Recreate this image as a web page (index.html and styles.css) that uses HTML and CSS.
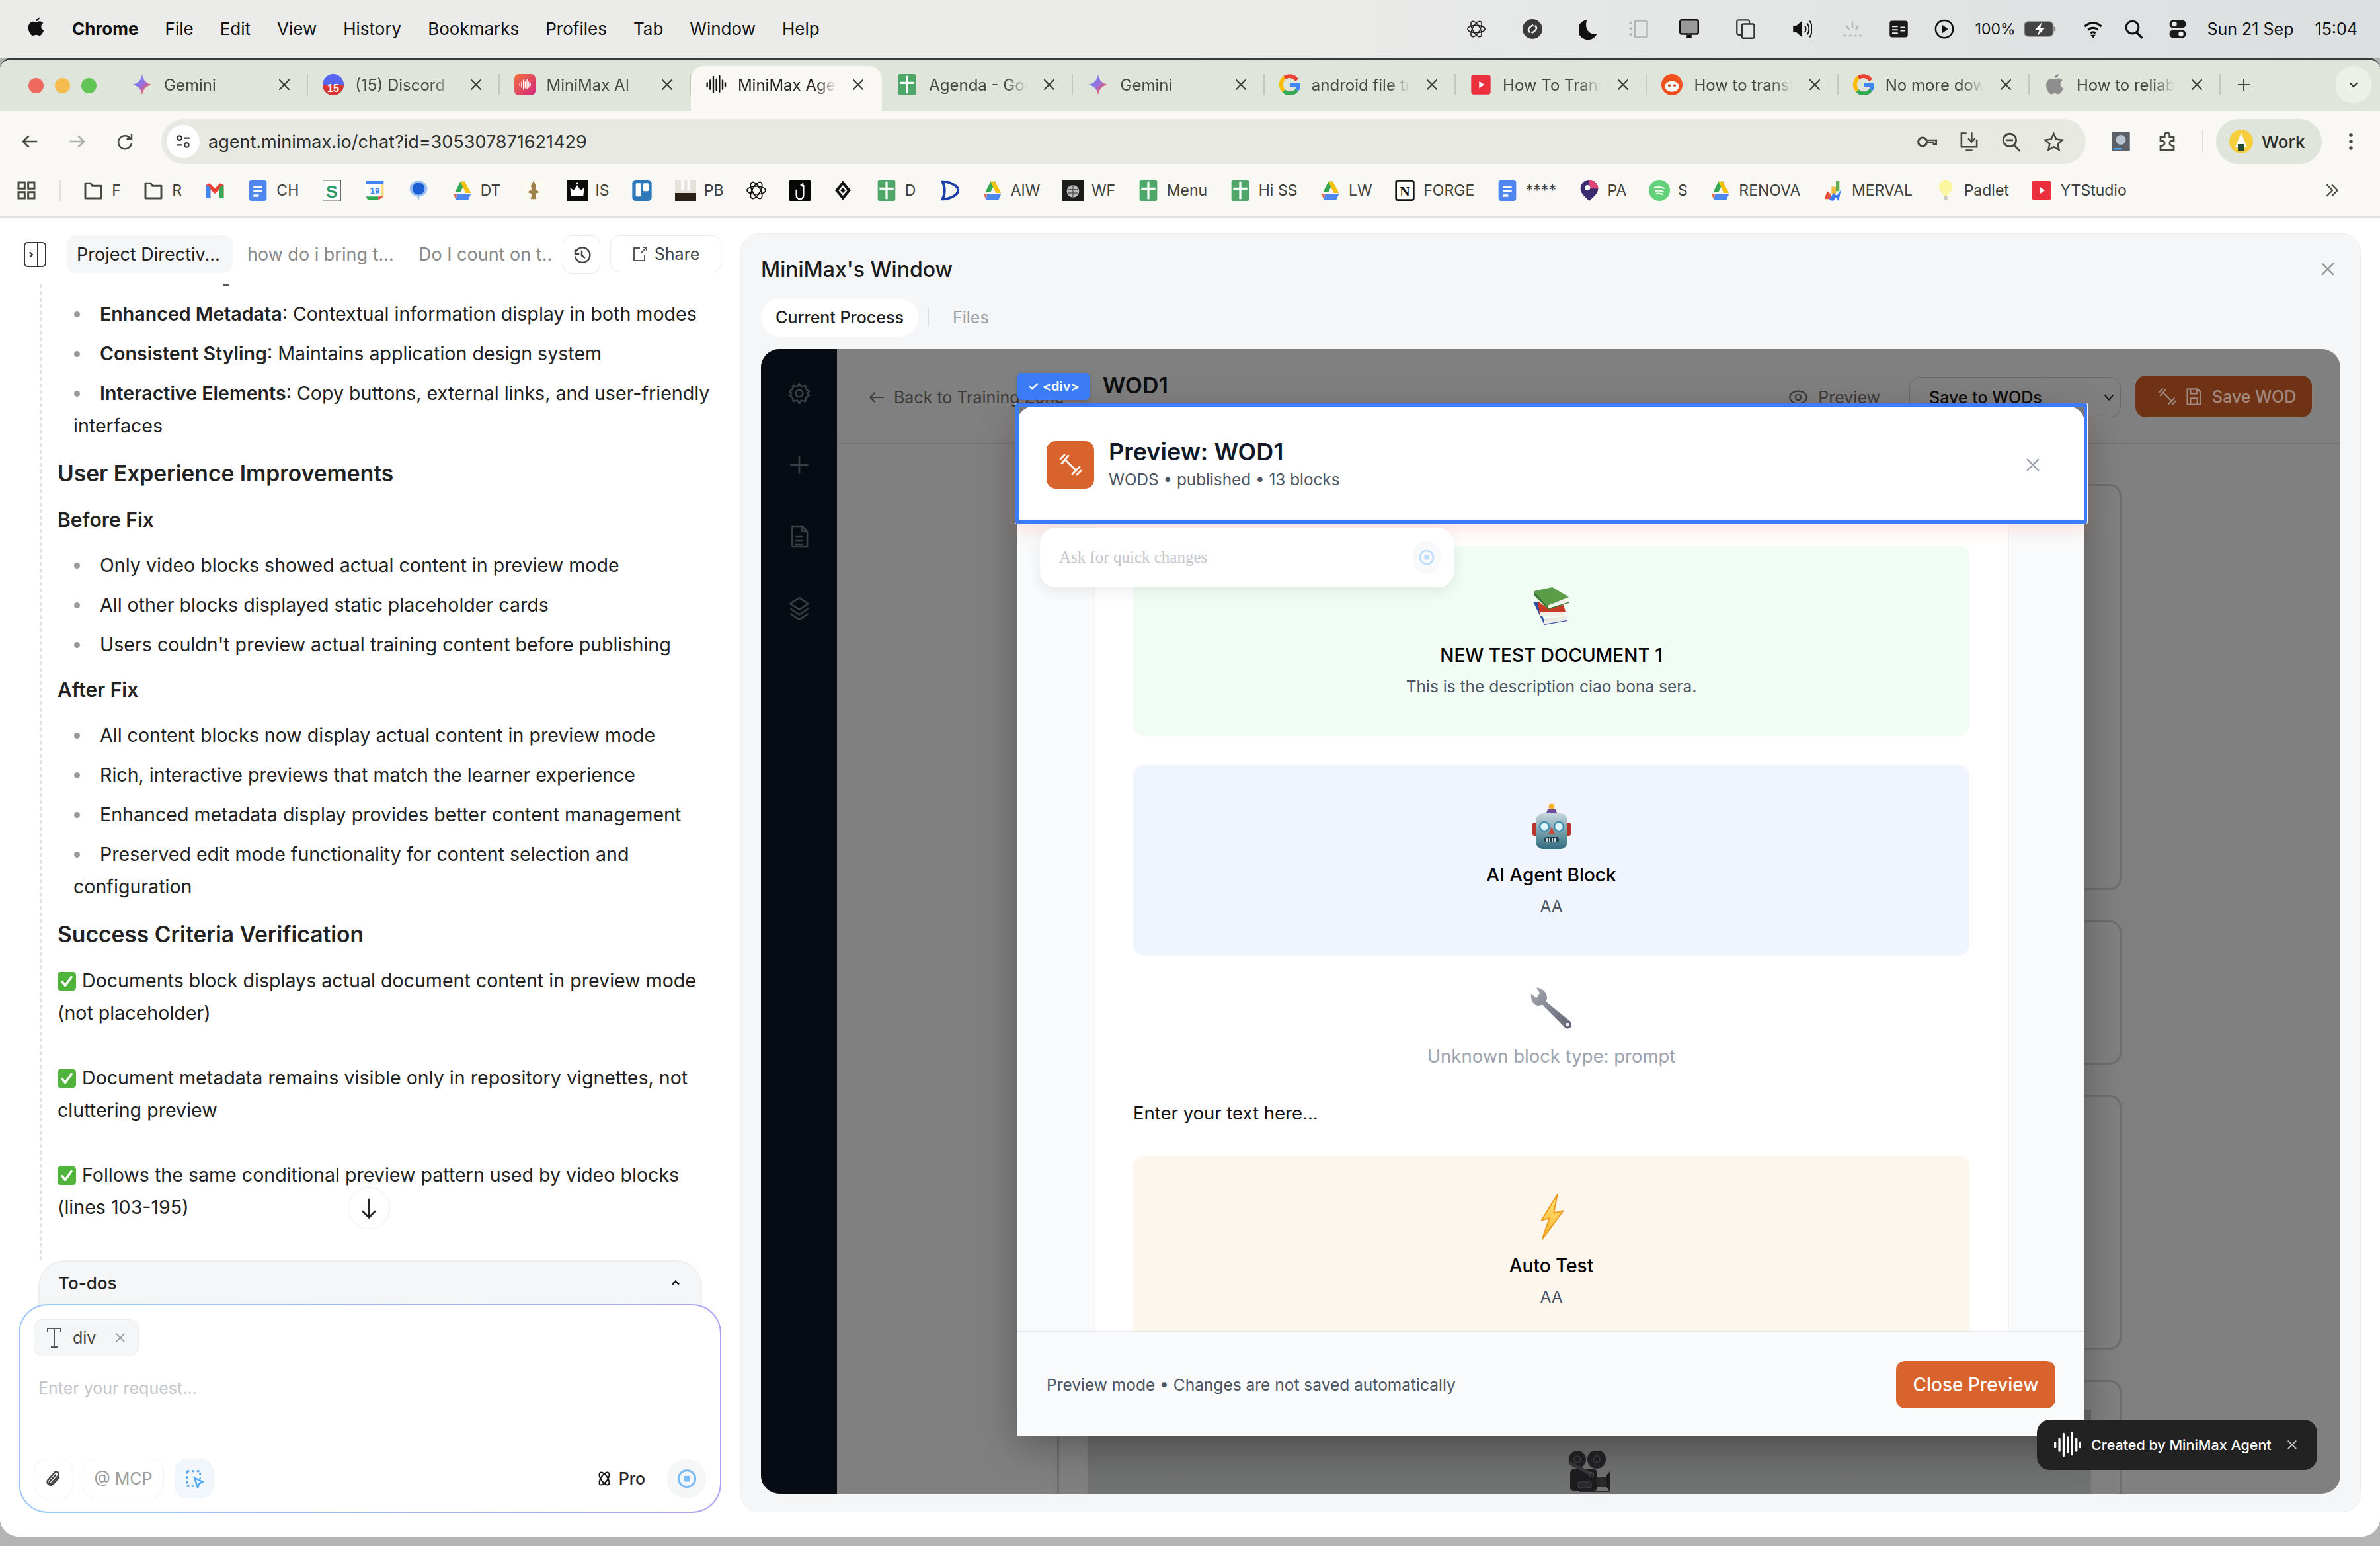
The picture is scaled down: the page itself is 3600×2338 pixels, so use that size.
FILE: index.html
```html
<!DOCTYPE html>
<html>
<head>
    <title>MiniMax Agent</title>
    <link rel="stylesheet" href="styles.css">
</head>
<body>
    <svg class="defs">
        <defs>
            <linearGradient id="gem" x1="0" y1="0" x2="1" y2="1"><stop offset="0" stop-color="#4b8df5"/><stop offset=".5" stop-color="#9a6fe0"/><stop offset=".75" stop-color="#e8605a"/><stop offset="1" stop-color="#f6c344"/></linearGradient>
            <linearGradient id="mm" x1="0" y1="0" x2="1" y2="1"><stop offset="0" stop-color="#f0703c"/><stop offset="1" stop-color="#d6267e"/></linearGradient>
            <linearGradient id="robo" x1="0" y1="0" x2="0" y2="1"><stop offset="0" stop-color="#c6d6dc"/><stop offset="1" stop-color="#2f6c7e"/></linearGradient>
            <linearGradient id="steel" x1="0" y1="0" x2="1" y2="1"><stop offset="0" stop-color="#a3a5ae"/><stop offset="1" stop-color="#5f6270"/></linearGradient>
            <linearGradient id="volt" x1="0" y1="0" x2="0" y2="1"><stop offset="0" stop-color="#ffe27a"/><stop offset="1" stop-color="#fbb92e"/></linearGradient>
        </defs>
        <symbol id="g-gemini" viewBox="0 0 24 24"><path d="M12 0C12.7 6.6 17 11.2 23 12 17 12.8 12.7 17.4 12 24 11.3 17.4 7 12.8 1 12 7 11.2 11.3 6.6 12 0Z" fill="url(#gem)"/></symbol>
        <symbol id="g-sheet" viewBox="0 0 24 24"><rect x="2" width="20" height="24" rx="2" fill="#4ea768"/><path d="M12 2v20M4 10h16" stroke="#fff" stroke-width="2.4"/></symbol>
        <symbol id="g-docs" viewBox="0 0 24 24"><rect x="2" width="20" height="24" rx="3" fill="#4f86f0"/><path d="M7 8h10M7 13h10M7 18h6" stroke="#fff" stroke-width="2.6"/></symbol>
        <symbol id="g-drive" viewBox="0 0 24 24"><path d="M9 2h6L9 14H3Z" fill="#34a853" transform="translate(1 0)"/><path d="M10 2h5l7 13h-6Z" fill="#f4c20d"/><path d="M6 16h16l-3 7H5Z" fill="#4f86f0"/><path d="M2 16l4 0 -1 7Z" fill="#ea6b4a"/></symbol>
        <symbol id="g-google" viewBox="0 0 24 24"><g fill="none" stroke-width="4.4"><path d="M20 7A10 10 0 0 0 6 4" stroke="#ea4335"/><path d="M6 4A10 10 0 0 0 5 19" stroke="#fbbc05"/><path d="M5 19A10 10 0 0 0 20 18" stroke="#34a853"/><path d="M20 18A10 10 0 0 0 22 12H12" stroke="#4285f4"/></g></symbol>
        <symbol id="g-yt" viewBox="0 0 24 24"><rect x="1" y="1" width="22" height="22" rx="3" fill="#ea2f3d"/><path d="M10 8l6 4-6 4Z" fill="#fff"/></symbol>
        <symbol id="g-folder" viewBox="0 0 24 24"><path d="M3 4h6l2 3h10v14H3Z" fill="none" stroke="#45483f" stroke-width="2.2" stroke-linejoin="round"/></symbol>
        <symbol id="g-knot" viewBox="0 0 24 24"><g fill="none" stroke="currentColor" stroke-width="1.3"><ellipse cx="12" cy="12" rx="10.500" ry="4.500"/><ellipse cx="12" cy="12" rx="10.500" ry="4.500" transform="rotate(60 12 12)"/><ellipse cx="12" cy="12" rx="10.500" ry="4.500" transform="rotate(120 12 12)"/></g></symbol>
        <symbol id="g-wave" viewBox="0 0 24 24"><path d="M2 10v4M5.500 7v10M9 3v18M12.500 6v12M16 2v18M19.500 7v10M22.500 10v4" fill="none" stroke="currentColor" stroke-width="1.8" stroke-linecap="round"/></symbol>
        <symbol id="g-close" viewBox="0 0 24 24"><path d="M5 5l14 14M19 5L5 19" fill="none" stroke="currentColor" stroke-width="2.2" stroke-linecap="round"/></symbol>
        <symbol id="g-stop" viewBox="0 0 24 24"><circle cx="12" cy="12" r="10" fill="none" stroke="currentColor" stroke-width="2.6"/><rect x="8.500" y="8.500" width="7" height="7" rx="1" fill="currentColor"/></symbol>
        <symbol id="g-dumbbell" viewBox="0 0 36 36"><path d="M10 10l17 17M5 16L15 4M3 9l6-6M21 32l11-11M28 33l6-6" fill="none" stroke="currentColor" stroke-width="2.800" stroke-linecap="round"/></symbol>
        <symbol id="g-check" viewBox="0 0 24 24"><rect width="24" height="24" rx="4" fill="#4fb33c"/><path d="M6 12.500l4 5 8-11" fill="none" stroke="#fff" stroke-width="3" stroke-linecap="round" stroke-linejoin="round"/></symbol>
    </svg>

    <div class="menubar">
        <div class="menu-left">
            <svg class="apple" viewBox="0 0 24 28"><path d="M17 0c.2 2.400-2 5.400-5 5.200C11.700 2.800 14.200.3 17 0ZM12 7c1.300 0 3-1.400 5.300-1.400 1.800 0 3.900 1 5.100 2.800-4.300 2.600-3.600 8.500.9 10.300-1.200 3.200-3.800 7.800-6.400 7.800-1.700 0-2.400-1.200-4.700-1.200-2.200 0-3 1.200-4.600 1.200C4.600 26.500.7 20.500.7 15c0-5.600 3.600-9 7-9C9.700 6 11 7 12 7Z" fill="#111"/></svg>
            <b>Chrome</b><span>File</span><span>Edit</span><span>View</span><span>History</span><span>Bookmarks</span><span>Profiles</span><span>Tab</span><span>Window</span><span>Help</span>
        </div>
        <div class="menu-right">
            <svg class="mi mi-knot"><use href="#g-knot"/></svg>
            <svg class="mi mi-shaz" viewBox="0 0 24 24"><circle cx="12" cy="12" r="12" fill="#3a3a3a"/><path d="M9 16c-3-2-2-5 1-7l3-2M15 8c3 2 2 5-1 7l-3 2" fill="none" stroke="#eee" stroke-width="2"/></svg>
            <svg class="mi mi-moon" viewBox="0 0 24 24"><path d="M10 1a12 12 0 1 0 12 17C13 20 6 11 10 1Z" fill="#111"/></svg>
            <svg class="mi" viewBox="0 0 24 24"><rect x="7" y="2" width="15" height="20" rx="2" fill="none" stroke="#b5b7b7" stroke-width="2"/><path d="M2 3v3M2 10v3M2 17v3" stroke="#b5b7b7" stroke-width="3"/></svg>
            <svg class="mi" viewBox="0 0 24 24"><rect x="1" y="1" width="22" height="17" rx="2" fill="#999" stroke="#111" stroke-width="2"/><rect x="9" y="19" width="6" height="4" fill="#111"/></svg>
            <svg class="mi mi-copy" viewBox="0 0 24 24"><rect x="1" y="1" width="15" height="18" rx="2" fill="none" stroke="#333" stroke-width="1.800"/><rect x="7" y="6" width="15" height="17" rx="2" fill="#e6e8e8" stroke="#333" stroke-width="2"/></svg>
            <svg class="mi mi-vol" viewBox="0 0 24 24"><path d="M1 8h4l7-6v20l-7-6H1Z" fill="#111"/><path d="M15 8c2 2 2 6 0 8M18 5c3 4 3 10 0 14M21 2c4 6 4 14 0 20" fill="none" stroke="#111" stroke-width="1.500"/></svg>
            <svg class="mi" viewBox="0 0 24 24"><path d="M12 3v8M5 8l3 5M19 8l-3 5M1 20h4M8 20h3M14 20h3M20 20h3" stroke="#b5b7b7" stroke-width="2"/></svg>
            <svg class="mi mi-win" viewBox="0 0 24 24"><rect x="1" y="2" width="22" height="20" rx="3" fill="#1a1a1a"/><path d="M4 9h7M4 13h7M4 17h7M14 10h6M14 14h6" stroke="#eee" stroke-width="1.600"/></svg>
            <svg class="mi mi-play" viewBox="0 0 24 24"><circle cx="12" cy="12" r="10.500" fill="none" stroke="#111" stroke-width="2"/><path d="M9.500 7l7 5-7 5Z" fill="#111"/></svg>
            <span class="pct">100%</span>
            <svg class="mi mi-batt" viewBox="0 0 46 24"><rect x="1" y="2" width="40" height="20" rx="5" fill="#444" stroke="#888" stroke-width="1.500"/><path d="M25 3l-9 10h6l-3 9 10-11h-6Z" fill="#fff"/><path d="M43 9v6" stroke="#888" stroke-width="2.500"/></svg>
            <svg class="mi mi-wifi" viewBox="0 0 24 24"><path d="M2 9a14 14 0 0 1 20 0M6 13a9 9 0 0 1 12 0M9 17a4.500 4.500 0 0 1 6 0" fill="none" stroke="#111" stroke-width="2.600"/><path d="M12 23l-3-4h6Z" fill="#111"/></svg>
            <svg class="mi mi-srch" viewBox="0 0 24 24"><circle cx="10" cy="10" r="7.500" fill="none" stroke="#111" stroke-width="2.400"/><path d="M15 16l7 7" stroke="#111" stroke-width="2.600"/></svg>
            <svg class="mi mi-ctl" viewBox="0 0 24 24"><rect x="2" y="1" width="20" height="10" rx="5" fill="#1a1a1a"/><circle cx="8" cy="6" r="3" fill="#eee"/><rect x="2" y="13" width="20" height="10" rx="5" fill="#1a1a1a"/><circle cx="16" cy="18" r="3" fill="#eee"/></svg>
            <span class="clock">Sun 21 Sep</span><span class="clock">15:04</span>
        </div>
    </div>

    <div class="browser">
        <div class="tabstrip">
            <div class="lights"><i class="light-red"></i><i class="light-amber"></i><i class="light-green"></i></div>
            <div class="tab"><svg class="fav"><use href="#g-gemini"/></svg><span class="tab-title">Gemini</span><svg class="tab-x"><use href="#g-close"/></svg></div>
            <div class="tab"><svg class="fav" viewBox="0 0 24 24"><circle cx="12" cy="12" r="12" fill="#5865f2"/><path d="M0 12a12 12 0 0 0 24 0Z" fill="#d8352c"/><text x="12" y="20" text-anchor="middle" class="fav-num">15</text></svg><span class="tab-title">(15) Discord</span><svg class="tab-x"><use href="#g-close"/></svg></div>
            <div class="tab"><svg class="fav" viewBox="0 0 24 24"><rect width="24" height="24" rx="5" fill="url(#mm)"/><use href="#g-wave" x="5" y="5" width="14" height="14" color="#fff"/></svg><span class="tab-title">MiniMax AI</span><svg class="tab-x"><use href="#g-close"/></svg></div>
            <div class="tab active"><svg class="fav fav-ink"><use href="#g-wave"/></svg><span class="tab-title">MiniMax Agent</span><svg class="tab-x"><use href="#g-close"/></svg></div>
            <div class="tab"><svg class="fav"><use href="#g-sheet"/></svg><span class="tab-title">Agenda - Google</span><svg class="tab-x"><use href="#g-close"/></svg></div>
            <div class="tab"><svg class="fav"><use href="#g-gemini"/></svg><span class="tab-title">Gemini</span><svg class="tab-x"><use href="#g-close"/></svg></div>
            <div class="tab"><svg class="fav"><use href="#g-google"/></svg><span class="tab-title">android file transfer</span><svg class="tab-x"><use href="#g-close"/></svg></div>
            <div class="tab"><svg class="fav"><use href="#g-yt"/></svg><span class="tab-title">How To Transfer</span><svg class="tab-x"><use href="#g-close"/></svg></div>
            <div class="tab"><svg class="fav" viewBox="0 0 24 24"><circle cx="12" cy="12" r="12" fill="#f0501e"/><ellipse cx="12" cy="14" rx="8" ry="6" fill="#fff"/><circle cx="9" cy="13" r="1.600" fill="#c52"/><circle cx="15" cy="13" r="1.600" fill="#c52"/></svg><span class="tab-title">How to transfer</span><svg class="tab-x"><use href="#g-close"/></svg></div>
            <div class="tab"><svg class="fav"><use href="#g-google"/></svg><span class="tab-title">No more downloads</span><svg class="tab-x"><use href="#g-close"/></svg></div>
            <div class="tab"><svg class="fav" viewBox="0 0 24 28"><path d="M17 0c.2 2.400-2 5.400-5 5.200C11.700 2.800 14.200.3 17 0ZM12 7c1.300 0 3-1.400 5.300-1.400 1.800 0 3.900 1 5.100 2.800-4.300 2.600-3.600 8.500.9 10.300-1.200 3.200-3.800 7.800-6.400 7.800-1.700 0-2.400-1.200-4.700-1.200-2.200 0-3 1.200-4.600 1.200C4.600 26.500.7 20.500.7 15c0-5.600 3.600-9 7-9C9.700 6 11 7 12 7Z" fill="#8e8e8e"/></svg><span class="tab-title">How to reliably</span><svg class="tab-x"><use href="#g-close"/></svg></div>
            <svg class="tab-plus" viewBox="0 0 24 24"><path d="M12 3v18M3 12h18" stroke="#45483f" stroke-width="2"/></svg>
            <div class="tab-more"><svg viewBox="0 0 24 24"><path d="M6 9l6 6 6-6" fill="none" stroke="#333" stroke-width="2.400"/></svg></div>
        </div>

        <div class="toolbar">
            <div class="nav-row">
                <svg class="nav" viewBox="0 0 24 24"><path d="M21 12H4M11 5l-7 7 7 7" fill="none" stroke="#45483f" stroke-width="2"/></svg>
                <svg class="nav" viewBox="0 0 24 24"><path d="M3 12h17M13 5l7 7-7 7" fill="none" stroke="#a9aba5" stroke-width="2"/></svg>
                <svg class="nav" viewBox="0 0 24 24"><path d="M19 9a8 8 0 1 0 1 5M20 3v6h-6" fill="none" stroke="#45483f" stroke-width="2"/></svg>
                <div class="url">
                    <span class="site"><svg viewBox="0 0 24 24"><circle cx="7" cy="7" r="3" fill="none" stroke="#333" stroke-width="2"/><path d="M13 7h8M3 17h8" stroke="#333" stroke-width="2"/><circle cx="17" cy="17" r="3" fill="none" stroke="#333" stroke-width="2"/></svg></span>
                    <span class="url-text">agent.minimax.io/chat?id=305307871621429</span>
                    <span class="url-icons">
                        <svg viewBox="0 0 24 24"><circle cx="7" cy="12" r="5" fill="none" stroke="#45483f" stroke-width="2.400"/><path d="M12 10h11v5h-3v-2h-8" fill="none" stroke="#45483f" stroke-width="2"/></svg>
                        <svg viewBox="0 0 24 24"><path d="M9 2H3v16h18V9M8 22h8M15 1v10M11 8l4 4 4-4" fill="none" stroke="#45483f" stroke-width="2"/></svg>
                        <svg viewBox="0 0 24 24"><circle cx="10" cy="10" r="7.500" fill="none" stroke="#45483f" stroke-width="2.200"/><path d="M15 16l7 7M6 10h8" stroke="#45483f" stroke-width="2.200"/></svg>
                        <svg viewBox="0 0 24 24"><path d="M12 2.500l3 6.500 7 .8-5.200 4.700 1.400 7L12 18l-6.200 3.500 1.400-7L2 9.800 9 9Z" fill="none" stroke="#45483f" stroke-width="2"/></svg>
                    </span>
                </div>
                <svg class="nav ext" viewBox="0 0 24 24"><rect x="1" width="22" height="24" rx="2" fill="#5b6067"/><circle cx="12" cy="10" r="6" fill="#b7c3cf"/><rect x="3" y="20" width="10" height="2" fill="#4fa3f0"/></svg>
                <svg class="nav puzzle" viewBox="0 0 24 24"><path d="M4 6h5V4a3 3 0 0 1 6 0v2h5v5h-2a3 3 0 0 0 0 6h2v5H4v-5h2a3 3 0 0 0 0-6H4Z" fill="none" stroke="#45483f" stroke-width="2.200"/></svg>
                <i class="tool-sep"></i>
                <div class="work"><svg viewBox="0 0 36 36"><circle cx="18" cy="18" r="18" fill="#f7cf3e"/><path d="M18 5l9 22H9Z" fill="#fff"/><rect x="13" y="22" width="10" height="10" fill="#244a3a"/></svg><span>Work</span></div>
                <svg class="nav kebab" viewBox="0 0 24 24"><circle cx="12" cy="4" r="2.200" fill="#45483f"/><circle cx="12" cy="12" r="2.200" fill="#45483f"/><circle cx="12" cy="20" r="2.200" fill="#45483f"/></svg>
            </div>
            <div class="bookmarks">
                <svg class="bm-ico" viewBox="0 0 24 24"><path d="M3 3h7v7H3ZM14 3h7v7h-7ZM3 14h7v7H3ZM14 14h7v7h-7Z" fill="none" stroke="#45483f" stroke-width="2.200"/></svg>
                <i class="bm-sep"></i>
                <div class="bm"><svg class="bm-ico"><use href="#g-folder"/></svg><span>F</span></div>
                <div class="bm"><svg class="bm-ico"><use href="#g-folder"/></svg><span>R</span></div>
                <div class="bm"><svg class="bm-ico" viewBox="0 0 24 24"><path d="M2 21V6l4-2 6 6 6-6 4 2v15h-5V11l-5 5-5-5v10Z" fill="#ea4335"/><path d="M2 21V6l5 3v12Z" fill="#4285f4"/><path d="M22 21V6l-5 3v12Z" fill="#34a853"/></svg></div>
                <div class="bm"><svg class="bm-ico"><use href="#g-docs"/></svg><span>CH</span></div>
                <div class="bm"><svg class="bm-ico" viewBox="0 0 24 24"><rect x="2" width="20" height="24" fill="#fff" stroke="#333" stroke-width=".6"/><text x="12" y="20" text-anchor="middle" class="bm-s">S</text></svg></div>
                <div class="bm"><svg class="bm-ico" viewBox="0 0 24 24"><rect x="2" y="1" width="20" height="22" rx="2" fill="#fff"/><path d="M2 1h20v4H2Z" fill="#4285f4"/><path d="M2 19h14v4H4Z" fill="#34a853"/><path d="M16 19h6l-6 4Z" fill="#ea4335"/><path d="M22 5v14h-3V5Z" fill="#fbbc05" opacity=".5"/><text x="12" y="16" text-anchor="middle" class="bm-n">19</text></svg></div>
                <div class="bm"><svg class="bm-ico" viewBox="0 0 24 24"><ellipse cx="12" cy="10" rx="10" ry="9" fill="#9cc0f4"/><ellipse cx="12" cy="10" rx="7" ry="7" fill="#1c5fd4"/><path d="M10 17h4l-2 7Z" fill="#9cc0f4"/></svg></div>
                <div class="bm"><svg class="bm-ico"><use href="#g-drive"/></svg><span>DT</span></div>
                <div class="bm"><svg class="bm-ico" viewBox="0 0 24 24"><rect width="24" height="24" fill="#fbfaf0"/><path d="M12 1l3 6-1 4 5 3-5 2 1 6h-6l1-6-5-2 5-3-1-4Z" fill="#9d7f4a"/></svg></div>
                <div class="bm"><svg class="bm-ico" viewBox="0 0 24 24"><rect width="24" height="24" fill="#0b0b0b"/><path d="M5 18h14l1-9-4 3-4-6-4 6-4-3Z" fill="#fff"/><circle cx="12" cy="4" r="1.400" fill="#fff"/></svg><span>IS</span></div>
                <div class="bm"><svg class="bm-ico" viewBox="0 0 24 24"><rect x="1" width="22" height="24" rx="4" fill="#2f78b9"/><rect x="5" y="4" width="6" height="15" rx="1" fill="#fff"/><rect x="13.500" y="4" width="6" height="9" rx="1" fill="#fff"/></svg></div>
                <div class="bm"><svg class="bm-ico" viewBox="0 0 24 24"><rect width="24" height="24" fill="#e6e2dc"/><path d="M7 0h3v12H7ZM14 0h3v12h-3Z" fill="#fff"/><path d="M0 15h24v9H0Z" fill="#2a2015"/></svg><span>PB</span></div>
                <div class="bm"><svg class="bm-ico ink"><use href="#g-knot"/></svg></div>
                <div class="bm"><svg class="bm-ico" viewBox="0 0 24 24"><rect width="24" height="24" rx="1" fill="#060606"/><path d="M8 11v7a4 4 0 0 0 8 0V6" fill="none" stroke="#fff" stroke-width="1.800"/><path d="M12 6l4-3v6Z" fill="#fff"/></svg></div>
                <div class="bm"><svg class="bm-ico" viewBox="0 0 24 24"><path d="M12 1l9 11-9 11-9-11Z" fill="#111"/><path d="M12 6l5 6-5 6-5-6Z" fill="#fff"/><path d="M12 9l3 3-3 3-3-3Z" fill="#111"/></svg></div>
                <div class="bm"><svg class="bm-ico"><use href="#g-sheet"/></svg><span>D</span></div>
                <div class="bm"><svg class="bm-ico" viewBox="0 0 24 24"><path d="M5 2c10 0 18 6 18 10S15 22 5 22c3-6 3-14 0-20Z" fill="none" stroke="#1b3ea8" stroke-width="3"/></svg></div>
                <div class="bm"><svg class="bm-ico"><use href="#g-drive"/></svg><span>AIW</span></div>
                <div class="bm"><svg class="bm-ico" viewBox="0 0 24 24"><rect width="24" height="24" fill="#1c1c1c"/><circle cx="12" cy="13" r="7" fill="#bdbdbd"/><path d="M6 11h12M6 15h12M12 6v14" stroke="#555"/></svg><span>WF</span></div>
                <div class="bm"><svg class="bm-ico"><use href="#g-sheet"/></svg><span>Menu</span></div>
                <div class="bm"><svg class="bm-ico"><use href="#g-sheet"/></svg><span>Hi SS</span></div>
                <div class="bm"><svg class="bm-ico"><use href="#g-drive"/></svg><span>LW</span></div>
                <div class="bm"><svg class="bm-ico" viewBox="0 0 24 24"><rect x="2" y="1" width="20" height="22" rx="2" fill="#fff" stroke="#111" stroke-width="2"/><text x="12" y="19" text-anchor="middle" class="bm-notion">N</text></svg><span>FORGE</span></div>
                <div class="bm"><svg class="bm-ico"><use href="#g-docs"/></svg><span>****</span></div>
                <div class="bm"><svg class="bm-ico" viewBox="0 0 24 24"><path d="M12 0a10 10 0 0 1 10 10c0 6-6 10-10 14C8 20 2 16 2 10A10 10 0 0 1 12 0Z" fill="#3a2a6e"/><path d="M12 0a10 10 0 0 1 10 10H12Z" fill="#e0447a"/><circle cx="10" cy="9" r="3" fill="#fff"/></svg><span>PA</span></div>
                <div class="bm"><svg class="bm-ico" viewBox="0 0 24 24"><circle cx="12" cy="12" r="12" fill="#63d07a"/><path d="M6 9c4-1 8-1 12 1M7 13c3-1 7-1 10 1M8 16c3-1 5-1 8 1" fill="none" stroke="#f4fff4" stroke-width="1.600"/></svg><span>S</span></div>
                <div class="bm"><svg class="bm-ico"><use href="#g-drive"/></svg><span>RENOVA</span></div>
                <div class="bm"><svg class="bm-ico" viewBox="0 0 24 24"><path d="M2 22l3-9 4 3 0 6Z" fill="#e0533c"/><path d="M15 1h4v12h-4Z" fill="#5fb14f"/><path d="M10 8h5v8h-5Z" fill="#f0b93f"/><path d="M7 23l5-8 4 3 5-7-3 13-3-4-3 4Z" fill="#3b7bf0"/></svg><span>MERVAL</span></div>
                <div class="bm"><svg class="bm-ico" viewBox="0 0 24 24"><path d="M12 0a8 8 0 0 1 5 14l-3 4h-4l-3-4A8 8 0 0 1 12 0Z" fill="#fdf6a0"/><path d="M10 18h4v5h-4Z" fill="#c9cbc7"/></svg><span>Padlet</span></div>
                <div class="bm"><svg class="bm-ico"><use href="#g-yt"/></svg><span>YTStudio</span></div>
                <svg class="bm-more" viewBox="0 0 24 24"><path d="M5 4l8 8-8 8M12 4l8 8-8 8" fill="none" stroke="#45483f" stroke-width="2"/></svg>
            </div>
        </div>

        <div class="main">
            <section class="chat">
                <div class="chat-tabs">
                    <svg class="side-toggle" viewBox="0 0 34 38"><rect x="1" y="1" width="32" height="36" rx="5" fill="none" stroke="#333" stroke-width="2"/><path d="M21 1v36M9 15l4 4-4 4" fill="none" stroke="#333" stroke-width="2"/></svg>
                    <div class="chat-tab current">Project Directiv...</div>
                    <div class="chat-tab">how do i bring t...</div>
                    <div class="chat-tab">Do I count on t..</div>
                    <div class="hist-btn"><svg viewBox="0 0 24 24"><path d="M4 6v5h5M4 11a9 9 0 1 1 0 3M12 7v6l4 3" fill="none" stroke="#444" stroke-width="2"/></svg></div>
                    <div class="share-btn"><svg viewBox="0 0 24 24"><path d="M12 3H3v19h16v-9M13 11l8-8M16 2h6v6" fill="none" stroke="#555" stroke-width="2"/></svg>Share</div>
                </div>

                <div class="chat-scroll">
                    <div class="clipped-tail"><i></i></div>
                    <ul>
                        <li><b>Enhanced Metadata</b>: Contextual information display in both modes</li>
                        <li><b>Consistent Styling</b>: Maintains application design system</li>
                        <li><b>Interactive Elements</b>: Copy buttons, external links, and user-friendly interfaces</li>
                    </ul>
                    <h3>User Experience Improvements</h3>
                    <h4>Before Fix</h4>
                    <ul>
                        <li>Only video blocks showed actual content in preview mode</li>
                        <li>All other blocks displayed static placeholder cards</li>
                        <li>Users couldn't preview actual training content before publishing</li>
                    </ul>
                    <h4>After Fix</h4>
                    <ul>
                        <li>All content blocks now display actual content in preview mode</li>
                        <li>Rich, interactive previews that match the learner experience</li>
                        <li>Enhanced metadata display provides better content management</li>
                        <li>Preserved edit mode functionality for content selection and configuration</li>
                    </ul>
                    <h3>Success Criteria Verification</h3>
                    <p><svg class="tick"><use href="#g-check"/></svg>Documents block displays actual document content in preview mode (not placeholder)</p>
                    <p><svg class="tick"><use href="#g-check"/></svg>Document metadata remains visible only in repository vignettes, not cluttering preview</p>
                    <p><svg class="tick"><use href="#g-check"/></svg>Follows the same conditional preview pattern used by video blocks (lines 103-195)</p>
                </div>

                <div class="scroll-down"><svg viewBox="0 0 24 24"><path d="M12 2v20M5 15l7 7 7-7" fill="none" stroke="#222" stroke-width="2"/></svg></div>

                <div class="todos"><span>To-dos</span><svg viewBox="0 0 24 24"><path d="M6 15l6-6 6 6" fill="none" stroke="#111" stroke-width="3"/></svg></div>

                <div class="composer">
                    <div class="chip">
                        <svg class="chip-t" viewBox="0 0 24 32"><path d="M2 7V2h20v5M12 2v28M7 30h10" fill="none" stroke="#555" stroke-width="2"/></svg>
                        <span>div</span>
                        <svg class="chip-x"><use href="#g-close"/></svg>
                    </div>
                    <div class="placeholder">Enter your request...</div>
                    <div class="composer-bar">
                        <div class="tool-btn"><svg viewBox="0 0 24 24"><path d="M19 10l-8 9a4 4 0 0 1-6-5l9-10a3 3 0 0 1 4 4l-9 10a1.500 1.500 0 0 1-2-2l8-9" fill="none" stroke="#444" stroke-width="2"/></svg></div>
                        <div class="tool-btn mcp">@ MCP</div>
                        <div class="tool-btn sel"><svg viewBox="0 0 24 24"><path d="M3 3h16v9M3 3v18h8" fill="none" stroke="#55a6f5" stroke-width="2.400" stroke-dasharray="3 3"/><path d="M12 11l10 5-4 2-2 5Z" fill="none" stroke="#55a6f5" stroke-width="2"/></svg></div>
                        <div class="pro"><svg viewBox="0 0 24 24"><g fill="none" stroke="#111" stroke-width="2"><ellipse cx="12" cy="12" rx="5" ry="11" transform="rotate(35 12 12)"/><ellipse cx="12" cy="12" rx="5" ry="11" transform="rotate(-35 12 12)"/></g></svg>Pro</div>
                        <div class="send"><svg><use href="#g-stop"/></svg></div>
                    </div>
                </div>
            </section>

            <section class="panel">
                <div class="panel-head"><span>MiniMax's Window</span><svg><use href="#g-close"/></svg></div>
                <div class="panel-tabs"><span class="pill">Current Process</span><i></i><span class="files">Files</span></div>

                <div class="viewport">
                    <aside class="rail">
                        <svg viewBox="0 0 24 24"><circle cx="12" cy="12" r="3.500"/><path d="M12 2l2 3 4-1 1 4 3 2-2 2 2 2-3 2-1 4-4-1-2 3-2-3-4 1-1-4-3-2 2-2-2-2 3-2 1-4 4 1Z"/></svg>
                        <svg viewBox="0 0 24 24"><path d="M12 3v18M3 12h18"/></svg>
                        <svg viewBox="0 0 24 24"><path d="M5 2h10l5 5v15H5ZM15 2v5h5M8 12h8M8 16h8M8 20h8"/></svg>
                        <svg viewBox="0 0 24 24"><path d="M12 2l9 6-9 6-9-6ZM3 13l9 6 9-6M3 18l9 6 9-6"/></svg>
                    </aside>
                    <div class="editor">
                        <div class="editor-top">
                            <svg class="back-arrow" viewBox="0 0 24 24"><path d="M22 12H3M10 5l-7 7 7 7" fill="none" stroke="#3a3a3a" stroke-width="2"/></svg>
                            <span class="back-link">Back to Training Zone</span>
                            <i class="top-sep"></i>
                            <span class="wod-name">WOD1</span>
                            <span class="top-spacer"></span>
                            <svg class="eye" viewBox="0 0 24 24"><ellipse cx="12" cy="12" rx="11" ry="8" fill="none" stroke="#3a3a3a" stroke-width="2"/><circle cx="12" cy="12" r="3.500" fill="none" stroke="#3a3a3a" stroke-width="2"/></svg>
                            <span class="prev-link">Preview</span>
                            <div class="dim-select"><span>Save to WODs</span><svg viewBox="0 0 24 24"><path d="M5 8l7 8 7-8" fill="none" stroke="#111" stroke-width="2"/></svg></div>
                            <div class="dim-save">
                                <svg><use href="#g-dumbbell"/></svg>
                                <svg viewBox="0 0 24 24"><path d="M4 2h13l4 4v16H4ZM8 2v6h8V2M8 22v-8h9v8" fill="none" stroke="#a08a80" stroke-width="2"/></svg>
                                <span>Save WOD</span>
                            </div>
                        </div>
                        <div class="editor-stack">
                            <div class="bg-card h-a"></div>
                            <div class="bg-card h-b"></div>
                            <div class="bg-card h-c"></div>
                            <div class="bg-card h-d">
                                <div class="dim-block">
                                    <svg class="camera" viewBox="0 0 63 64"><circle cx="13" cy="13" r="13" fill="#232325"/><circle cx="42" cy="13" r="14" fill="#232325"/><g fill="none" stroke="#56565a" stroke-width="1"><circle cx="13" cy="13" r="5"/><circle cx="42" cy="13" r="5"/></g><rect x="2" y="28" width="41" height="33" rx="5" fill="#1d1d1f"/><path d="M1 18l34 18" stroke="#38383b" stroke-width="5"/><circle cx="34" cy="36" r="3.500" fill="none" stroke="#5a5a5e"/><rect x="14" y="47" width="20" height="9" rx="2" fill="#2a2a2c" stroke="#47474a"/><rect x="43" y="40" width="14" height="15" fill="#2a2a2c"/><path d="M57 37l6-7v33l-6-8Z" fill="#1c1c1e"/><path d="M16 62h47" stroke="#2b2b2d" stroke-width="2"/></svg>
                                </div>
                            </div>
                        </div>
                    </div>

                    <div class="modal">
                        <div class="modal-head">
                            <div class="modal-logo"><svg><use href="#g-dumbbell"/></svg></div>
                            <div class="modal-title">
                                <h2>Preview: WOD1</h2>
                                <p>WODS • published • 13 blocks</p>
                            </div>
                            <svg class="modal-x"><use href="#g-close"/></svg>
                        </div>
                        <div class="modal-body">
                            <div class="modal-col">
                                <div class="block block-green">
                                    <svg class="emoji books" viewBox="0 0 55 58"><path d="M0 22h7l9 27 35-5 1 7-35 6Z" fill="#2c4fa6"/><path d="M16 49l35-6v7l-35 6Z" fill="#eceae4"/><path d="M7 21l15 11 24-5 3 10-39 6Z" fill="#c93a26"/><path d="M10 38l37-1v6l-37 1Z" fill="#f1eee6"/><path d="M1 6L29 0l25 15-32 13Z" fill="#5b9c48"/><path d="M1 6v6l21 21v-5Z" fill="#3f7a33"/><path d="M22 28l30-11v6l-29 8Z" fill="#f3f1ea"/><path d="M23 33l32-10" stroke="#3f7a33" stroke-width="1.400"/></svg>
                                    <div class="block-title">NEW TEST DOCUMENT 1</div>
                                    <div class="block-desc">This is the description ciao bona sera.</div>
                                </div>
                                <div class="block block-blue">
                                    <svg class="emoji" viewBox="0 0 60 70"><circle cx="30" cy="6" r="4.500" fill="#f5b22e"/><path d="M24 10h12l3 8H21Z" fill="#6b4f97"/><rect x="1" y="30" width="8" height="20" rx="3" fill="#b8332a"/><rect x="51" y="30" width="8" height="20" rx="3" fill="#b8332a"/><rect x="6" y="16" width="48" height="54" rx="11" fill="url(#robo)"/><circle cx="19" cy="36" r="7" fill="#dff3fb" stroke="#3e8fb0" stroke-width="2.500"/><circle cx="41" cy="36" r="7" fill="#dff3fb" stroke="#3e8fb0" stroke-width="2.500"/><path d="M30 36l5 11H25Z" fill="#c94a3a"/><rect x="19" y="52" width="22" height="8" rx="3.500" fill="#1c3c4a"/><path d="M23 53v6M27 53v6M31 53v6M35 53v6" stroke="#e6eef0" stroke-width="1.800"/></svg>
                                    <div class="block-title">AI Agent Block</div>
                                    <div class="block-desc">AA</div>
                                </div>
                                <div class="plain">
                                    <svg class="emoji wrench" viewBox="0 0 63 63"><path d="M9 1C17 1 25 8 25 16 25 19 24 21 23 22L60 52C64 56 62 63 56 63 53 63 51 61 50 59L18 27C15 28 12 29 9 28 3 26 0 18 1 10L9 17 14 9Z" fill="url(#steel)"/><circle cx="56" cy="57" r="2.800" fill="#f4f4f5"/></svg>
                                    <div class="plain-note">Unknown block type: prompt</div>
                                </div>
                                <div class="plain-text">Enter your text here...</div>
                                <div class="block block-orange">
                                    <svg class="emoji bolt" viewBox="0 0 44 64"><path d="M30 1L8 37l11-3L9 63 38 24l-13 3Z" fill="url(#volt)" stroke="#ee9a1c" stroke-width="1.800" stroke-linejoin="round"/></svg>
                                    <div class="block-title">Auto Test</div>
                                    <div class="block-desc">AA</div>
                                </div>
                            </div>
                        </div>
                        <div class="modal-foot">
                            <span>Preview mode • Changes are not saved automatically</span>
                            <div class="close-btn">Close Preview</div>
                        </div>
                    </div>

                    <div class="pick-box"></div>
                    <div class="pick-label">✓ &lt;div&gt;</div>
                    <div class="quick-ask">
                        <span>Ask for quick changes</span>
                        <div class="quick-go"><svg><use href="#g-stop"/></svg></div>
                    </div>
                    <div class="made-by">
                        <svg class="made-wave"><use href="#g-wave"/></svg>
                        <span>Created by MiniMax Agent</span>
                        <svg class="made-x"><use href="#g-close"/></svg>
                    </div>
                </div>
            </section>
        </div>
    </div>
</body>
</html>
```

FILE: styles.css
```css
* { box-sizing: border-box; }
html, body { margin: 0; width: 3600px; height: 2338px; overflow: hidden; }
body { font-family: Inter, "Liberation Sans", sans-serif; background: #b3b4b3; color: #1f1f1f; }
svg { display: block; flex: none; }
.defs { width: 0; height: 0; position: absolute; }

/* mac menu bar */
.menubar { height: 87px; display: flex; justify-content: space-between; align-items: center; padding: 0 34px 0 42px; background: linear-gradient(90deg, #ebecea 0%, #ebecea 50%, #dcdfe0 100%); font-size: 26px; color: #111; }
.menu-left { display: flex; align-items: center; gap: 40px; }
.menu-left b { font-weight: 700; margin-left: 2px; }
.apple { width: 25px; height: 30px; margin-top: -6px; }
.menu-right { display: flex; align-items: center; gap: 46px; }
.mi { width: 30px; height: 32px; }
.mi-knot { width: 30px; height: 40px; color: #222; margin-right: 4px; }
.mi-shaz { margin-left: 5px; }
.mi-moon { margin-left: 9px; }
.mi-copy { margin-left: 10px; }
.mi-vol { margin-left: 9px; }
.mi-win { margin-left: -6px; }
.mi-play { margin-left: -7px; }
.mi-batt { width: 50px; height: 28px; margin-left: -34px; }
.mi-wifi { margin-left: -6px; }
.mi-srch { margin-left: -14px; }
.mi-ctl { margin-left: -10px; }
.pct { font-size: 23px; margin-left: -14px; }
.clock { font-size: 25px; margin-left: -16px; }
.clock + .clock { margin-left: -14px; }

/* chrome tabs */
.browser { height: 2237px; background: #fff; border-top: 3px solid #3a3c3c; border-radius: 18px 18px 28px 28px; overflow: hidden; }
.tabstrip { height: 78px; padding-top: 10px; display: flex; background: #dfe5da; }
.lights { width: 177px; display: flex; gap: 17px; padding: 18px 0 0 43px; }
.lights i { width: 23px; height: 23px; border-radius: 50%; }
.light-red { background: #ee6a5f; }
.light-amber { background: #f5bd4f; }
.light-green { background: #61c454; }
.tab { width: 289.300px; height: 68px; padding: 0 24px 12px 22px; display: flex; align-items: center; position: relative; font-size: 24px; color: #45493f; }
.tab::after { content: ""; position: absolute; right: 0; top: 12px; width: 2px; height: 32px; background: #c3c9bd; }
.tab.active { background: #f9f8f5; border-radius: 20px 20px 0 0; color: #222; z-index: 1; }
.tab.active::after { display: none; }
.fav { width: 32px; height: 32px; }
.fav-ink { color: #111; }
.fav-num { font: 700 12px "Liberation Sans", sans-serif; fill: #fff; }
.tab-title { flex: 1; margin: 0 21px 0 17px; white-space: nowrap; overflow: hidden; -webkit-mask-image: linear-gradient(90deg, #000 78%, transparent); mask-image: linear-gradient(90deg, #000 78%, transparent); }
.tab-x { width: 24px; height: 24px; color: #3c3f38; }
.tab-plus { width: 24px; height: 24px; margin: 16px 0 0 23px; }
.tab-more { width: 54px; height: 56px; margin: 0 0 0 auto; margin-right: 13px; background: #ecf1e8; border-radius: 26px; display: flex; align-items: center; justify-content: center; }
.tab-more svg { width: 22px; height: 22px; }

/* toolbar */
.toolbar { height: 162px; background: #f9f8f5; border-bottom: 3px solid #e3e3e0; padding-top: 12px; }
.nav-row { height: 68px; display: flex; align-items: center; padding-left: 30px; }
.nav { width: 30px; height: 30px; margin-right: 42px; }
.nav + .url { margin-left: -2px; }
.url { width: 2911px; height: 68px; margin-right: 38px; margin-left: 0; background: #e8e9e3; border-radius: 34px; display: flex; align-items: center; padding-left: 8px; }
.site { width: 50px; height: 50px; background: #fff; border-radius: 50%; display: flex; align-items: center; justify-content: center; margin-right: 13px; }
.site svg { width: 26px; height: 26px; }
.url-text { font-size: 27px; color: #2d2f2b; flex: 1; }
.url-icons { display: flex; gap: 33px; padding-right: 33px; }
.url-icons svg { width: 31px; height: 31px; }
.nav.ext { height: 36px; margin-right: 40px; }
.nav.puzzle { height: 34px; margin-right: 38px; }
.tool-sep { width: 2px; height: 34px; background: #dfdfda; margin-right: 19px; }
.work { width: 160px; height: 68px; border-radius: 34px; background: #dfe5da; display: flex; align-items: center; gap: 13px; padding-left: 20px; font-size: 26px; font-weight: 500; color: #2a2c28; margin-right: 29px; }
.work svg { width: 36px; height: 36px; }
.nav.kebab { margin-right: 0; }

/* bookmarks */
.bookmarks { height: 58px; margin-top: 11px; display: flex; align-items: center; padding: 0 0 0 24px; gap: 33.600px; font-size: 23px; color: #3f423b; white-space: nowrap; }
.bm { display: flex; align-items: center; gap: 12px; }
.bm-ico { width: 32px; height: 32px; }
.bm-sep { width: 2px; height: 32px; background: #dfe3db; }
.ink { color: #111; }
.bm-s { font: 700 20px "Liberation Sans", sans-serif; fill: #2f9a6b; }
.bm-n { font: 700 10px "Liberation Sans", sans-serif; fill: #4285f4; }
.bm-notion { font: 700 16px "Liberation Serif", serif; fill: #111; }
.bm-more { width: 26px; height: 26px; margin-left: auto; margin-right: 60px; }

/* page */
.main { height: 1994px; display: flex; background: #fff; }
.chat { width: 1120px; height: 100%; position: relative; display: flex; flex-direction: column; padding-bottom: 36px; }
.chat-tabs { height: 100px; padding: 26px 0 0 36px; display: flex; align-items: flex-start; font-size: 27px; color: #888; flex: none; }
.side-toggle { width: 34px; height: 38px; margin: 10px 31px 0 0; }
.chat-tab { height: 57px; line-height: 57px; white-space: nowrap; margin-right: 22px; }
.chat-tab.current { width: 251px; padding-left: 15px; background: #f5f6f8; border-radius: 14px; color: #1f1f1f; margin-right: 22px; }
.chat-tab:nth-child(3) { width: 237px; margin-right: 22px; }
.chat-tab:nth-child(4) { width: 201px; margin-right: 17px; overflow: hidden; }
.hist-btn { width: 57px; height: 58px; border: 1px solid #e9eaec; border-radius: 14px; display: flex; align-items: center; justify-content: center; margin-right: 15px; flex: none; }
.hist-btn svg { width: 30px; height: 30px; }
.share-btn { width: 168px; height: 56px; border: 1px solid #e9eaec; border-radius: 14px; display: flex; align-items: center; justify-content: center; gap: 10px; color: #444; font-size: 25px; flex: none; }
.share-btn svg { width: 24px; height: 24px; }

.chat-scroll { flex: 1; min-height: 0; overflow: hidden; margin-left: 61px; width: 1021px; padding-left: 24px; border-left: 2px dashed #e2e2e2; font-size: 28.600px; line-height: 49px; color: #222; }
.clipped-tail { height: 20px; }
.clipped-tail i { display: block; width: 9px; height: 2px; margin-left: 250px; background: #555; }
.chat-scroll ul { margin: 0; padding: 0 0 0 24px; list-style: none; }
.chat-scroll li { margin-bottom: 11px; }
.chat-scroll li:last-child { margin-bottom: 0; }
.chat-scroll li::before { content: ""; display: inline-block; width: 9px; height: 9px; margin: 0 30px 4px 1px; border-radius: 50%; background: #9b9b9b; vertical-align: middle; }
.chat-scroll li b { font-weight: 600; }
.chat-scroll h3 { margin: 24px 0 25px; font-size: 33.600px; line-height: 48px; font-weight: 600; }
.chat-scroll h4 { margin: 0 0 23px; font-size: 30px; line-height: 42px; font-weight: 600; }
.chat-scroll ul + h4 { margin-top: 23px; }
.chat-scroll h3 + p { margin-top: -4px; }
.chat-scroll p { margin: 0 0 49px; }
.tick { display: inline-block; width: 28px; height: 28px; vertical-align: -5px; margin-right: 9px; }

.scroll-down { position: absolute; left: 526px; top: 1465px; width: 64px; height: 64px; border-radius: 50%; background: #fff; border: 1px solid #ececec; display: flex; align-items: center; justify-content: center; }
.scroll-down svg { width: 34px; height: 34px; }

.todos { flex: none; height: 80px; width: 1004px; margin: 0 0 -14px 58px; padding: 0 28px 14px 28px; background: #f5f6f8; border: 2px solid #eceef0; border-bottom: 0; border-radius: 40px 40px 0 0; display: flex; justify-content: space-between; align-items: center; font-size: 26px; font-weight: 500; }
.todos svg { width: 20px; height: 20px; }

.composer { flex: none; position: relative; width: 1063px; height: 316px; margin-left: 28px; padding: 21px 21px 20px; border: 2px solid transparent; border-radius: 44px; background: linear-gradient(#fff, #fff) padding-box, linear-gradient(90deg, #9cc8fb, #a9a2f7) border-box; display: flex; flex-direction: column; }
.chip { width: 159px; height: 56px; display: flex; align-items: center; padding-left: 18px; background: #f5f6f8; border: 1px solid #ececee; border-radius: 14px; font-size: 25px; color: #444; }
.chip-t { width: 24px; height: 32px; margin-right: 16px; }
.chip-x { width: 20px; height: 20px; margin-left: 27px; color: #999; }
.placeholder { margin: 30px 0 0 7px; font-size: 25px; line-height: 36px; color: #c3c5ca; flex: 1; }
.composer-bar { display: flex; align-items: center; gap: 14px; }
.tool-btn { width: 60px; height: 60px; border: 1px solid #f0f0f0; border-radius: 20px; display: flex; align-items: center; justify-content: center; }
.tool-btn svg { width: 30px; height: 30px; }
.tool-btn.mcp { width: 123px; font-size: 25px; color: #9b9b9b; }
.tool-btn.sel { background: #f2f7fe; border-color: #e8f1fc; margin-left: 2px; width: 59px; }
.pro { margin-left: auto; display: flex; align-items: center; gap: 10px; font-size: 25px; font-weight: 500; color: #222; margin-right: 19px; }
.pro svg { width: 24px; height: 28px; }
.send { width: 59px; height: 59px; background: #f5f6f8; border-radius: 28px; display: flex; align-items: center; justify-content: center; color: #7dbcf7; }
.send svg { width: 30px; height: 30px; }

/* right panel */
.panel { width: 2451px; height: 1934px; margin-top: 23px; padding: 0 30px; background: #f5f6f8; border: 1px solid #eceef0; border-radius: 28px; }
.panel-head { height: 97px; padding-top: 9px; display: flex; justify-content: space-between; align-items: center; font-size: 32px; font-weight: 500; color: #1b1b1b; }
.panel-head svg { width: 28px; height: 28px; color: #999; margin-right: 5px; }
.panel-tabs { height: 77px; display: flex; align-items: flex-start; font-size: 25px; font-weight: 500; }
.pill { width: 238px; height: 58px; line-height: 58px; text-align: center; background: #fff; border-radius: 29px; }
.panel-tabs i { width: 2px; height: 28px; margin: 15px 36px 0 14px; background: #dcdde0; }
.files { line-height: 58px; color: #9a9ca0; font-weight: 400; }

.viewport { height: 1731px; position: relative; display: flex; border-radius: 28px; overflow: hidden; background: #808080; }
.rail { width: 115px; flex: none; background: #070b13; display: flex; flex-direction: column; align-items: center; gap: 72px; padding-top: 49px; }
.rail svg { width: 36px; height: 36px; fill: none; stroke: #3b3f46; stroke-width: 1.800; stroke-linejoin: round; }
.editor { flex: 1; min-width: 0; }
.editor-top { height: 144px; padding: 40px 43px 0 47px; display: flex; align-items: flex-start; border-bottom: 2px solid #727272; font-size: 25px; color: #3a3a3a; }
.back-arrow { width: 26px; height: 26px; margin: 20px 13px 0 0; }
.back-link { line-height: 66px; white-space: nowrap; }
.top-sep { width: 1px; height: 60px; background: #6e6e6e; margin: 0 29px 0 28px; }
.wod-name { margin: -10px 0 0; font-size: 34px; line-height: 50px; font-weight: 600; color: #0e0e0e; }
.top-spacer { flex: 1; }
.eye { width: 28px; height: 28px; margin: 19px 16px 0 0; }
.prev-link { line-height: 66px; margin-right: 44px; }
.dim-select { width: 320px; height: 61px; margin: 2px 22px 0 0; padding: 0 6px 0 29px; display: flex; align-items: center; justify-content: space-between; border: 1px solid #6a6a6a; border-radius: 16px; color: #0d0d0d; font-weight: 500; }
.dim-select svg { width: 22px; height: 22px; margin-right: 0; }
.dim-save { width: 267px; height: 63px; padding-left: 34px; display: flex; align-items: center; gap: 10px; background: #6f3214; border-radius: 16px; color: #a08a80; font-weight: 500; }
.dim-save svg { width: 28px; height: 28px; }
.dim-save svg:first-child { margin-right: 2px; }
.dim-save span { margin-left: 4px; }

.editor-stack { padding: 60px 0 0 333px; display: flex; flex-direction: column; }
.bg-card { width: 1610px; flex: none; border: 3px solid #6e6e6e; border-radius: 18px; margin-bottom: 46px; }
.h-a { height: 614px; }
.h-b { height: 218px; }
.h-c { height: 385px; }
.h-d { height: 300px; padding: 42px 43px; }
.dim-block { height: 220px; padding-top: 62px; background: linear-gradient(#6a6a6a, #787979); display: flex; justify-content: center; }
.camera { width: 63px; height: 64px; }

/* preview modal */
.modal { position: absolute; left: 388px; top: 87px; width: 1614px; height: 1557px; display: flex; flex-direction: column; background: #f9fafb; border-radius: 24px 24px 0 0; overflow: hidden; box-shadow: 0 16px 60px rgba(0, 0, 0, .3); }
.modal-head { height: 177px; flex: none; background: #fff; padding: 0 64px 2px 44px; display: flex; align-items: center; }
.modal-logo { width: 72px; height: 72px; background: #d9632c; border-radius: 14px; color: #fff; display: flex; align-items: center; justify-content: center; }
.modal-logo svg { width: 36px; height: 36px; }
.modal-title { flex: 1; margin-left: 22px; }
.modal-title h2 { margin: 0; font-size: 36px; line-height: 44px; font-weight: 600; color: #111827; }
.modal-title p { margin: 0; font-size: 24.300px; line-height: 40px; color: #4b5563; }
.modal-x { width: 28px; height: 28px; color: #9ca3af; }
.modal-body { flex: 1; min-height: 0; overflow: hidden; padding: 0 114px 0 116px; }
.modal-col { height: 100%; padding: 33px 59px 0 58px; background: #fff; border-left: 1px solid #f3f4f6; border-right: 1px solid #f3f4f6; overflow: hidden; }
.block { border-radius: 16px; height: 288px; padding-top: 57px; margin-bottom: 44px; text-align: center; }
.block-green { background: #f1fcf4; }
.block-blue { background: #f0f5fd; }
.block-orange { background: #fdf6ec; border-radius: 16px 16px 0 0; margin-bottom: 0; }
.emoji { width: 60px; height: 70px; margin: 0 auto; }
.emoji.books { width: 55px; }
.emoji.wrench { width: 63px; }
.block-title { margin-top: 19px; font-size: 28px; line-height: 40px; font-weight: 500; color: #000; }
.block-desc { margin-top: 9px; font-size: 24.500px; line-height: 36px; color: #4b5563; }
.plain { text-align: center; }
.plain-note { margin-top: 18px; font-size: 27.500px; line-height: 40px; color: #9ca3af; }
.plain-text { margin: 42px 0 40px; font-size: 27.500px; line-height: 49px; color: #111; }
.modal-foot { height: 159px; flex: none; border-top: 2px solid #e5e7eb; padding: 0 44px; display: flex; justify-content: space-between; align-items: center; font-size: 24.500px; color: #4b5563; }
.close-btn { width: 241px; height: 72px; line-height: 72px; text-align: center; background: #d9632c; border-radius: 14px; color: #fff; font-size: 28px; font-weight: 500; }

/* overlays from the element picker */
.pick-box { position: absolute; left: 385px; top: 82px; width: 1621px; height: 182px; border: 5px solid #3b7bf6; border-radius: 3px; box-shadow: 0 0 0 1px #fff, 0 10px 26px rgba(255, 110, 90, .18); pointer-events: none; }
.pick-label { position: absolute; left: 388px; top: 36px; width: 109px; height: 41px; line-height: 41px; text-align: center; background: #3b7bf6; border-radius: 6px; color: #fff; font-size: 20px; font-weight: 600; box-shadow: 0 2px 6px rgba(0, 0, 0, .2); }
.quick-ask { position: absolute; left: 422px; top: 270px; width: 626px; height: 90px; padding: 0 20px 0 29px; display: flex; justify-content: space-between; align-items: center; background: #fff; border-radius: 24px; box-shadow: 0 6px 22px rgba(0, 0, 0, .08); font: 25px "Liberation Serif", serif; color: #c4c6cc; }
.quick-go { width: 42px; height: 50px; border-radius: 20px; background: #f8f9fb; color: #b9dcfc; display: flex; align-items: center; justify-content: center; }
.quick-go svg { width: 24px; height: 24px; }
.made-by { position: absolute; left: 1930px; top: 1619px; width: 424px; height: 76px; padding: 0 28px 0 24px; display: flex; align-items: center; background: #222; border-radius: 20px; color: #fff; font-size: 21.500px; font-weight: 500; white-space: nowrap; }
.made-wave { width: 44px; height: 44px; margin-right: 14px; }
.made-x { width: 20px; height: 20px; margin-left: auto; color: #ccc; }
```
